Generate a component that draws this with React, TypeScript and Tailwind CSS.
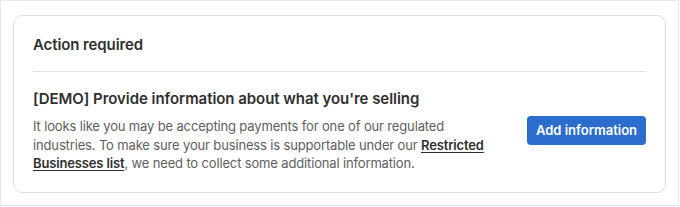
import React from "react";

export default function App() {
  return (
    <div
      className="w-[679px] h-[206px] border border-[#e8e8e8] bg-white pt-[14px] pl-[12px]"
      style={{ fontFamily: "Inter, 'Noto Sans', sans-serif" }}
    >
      <div className="w-[653px] h-[178px] rounded-[9px] border border-[#dedede] bg-white px-[19px]">
        <div className="h-[56px] pt-[4px] flex items-center border-b border-[#e2e2e2]">
          <h2 className="text-[15px] font-semibold text-[#2f2f2f] tracking-[-0.1px]">Action required</h2>
        </div>
        <div className="flex items-center pt-[17px]">
          <div className="w-[454px] shrink-0">
            <h3 className="text-[15px] font-semibold text-[#2f2f2f] leading-[20px] tracking-[-0.05px]">
              [DEMO] Provide information about what you're selling
            </h3>
            <p className="mt-[8px] text-[13px] leading-[18.5px] text-[#5e5e5e] tracking-[-0.15px]">
              It looks like you may be accepting payments for one of our regulated industries. To make sure
              your business is supportable under our{" "}
              <a className="font-semibold text-[#2f2f2f] underline underline-offset-2">Restricted Businesses list</a>
              , we need to collect some additional information.
            </p>
          </div>
          <div className="flex-1 flex justify-end">
            <button className="h-[29px] px-[9px] rounded-[4px] bg-[#2b6dcc] text-white text-[13px] font-semibold leading-none">
              Add information
            </button>
          </div>
        </div>
      </div>
    </div>
  );
}
